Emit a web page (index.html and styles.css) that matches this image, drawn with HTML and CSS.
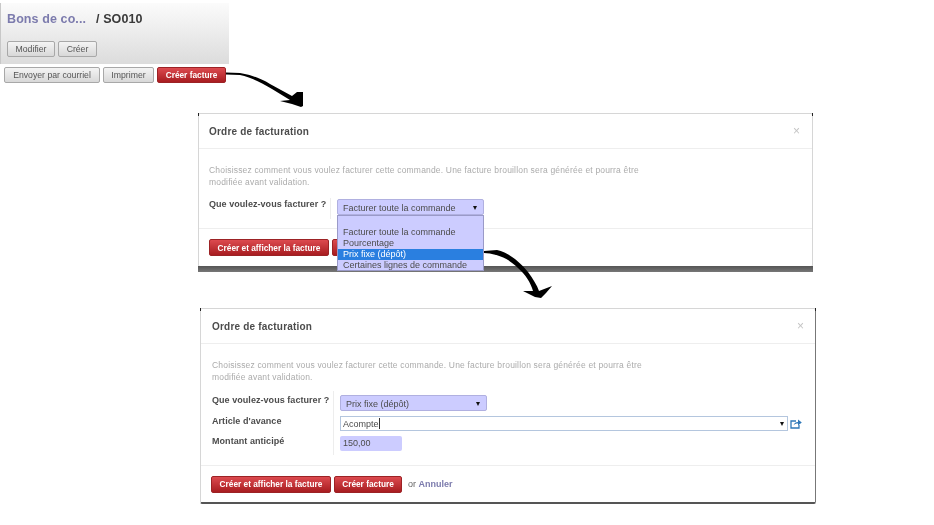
FILE: index.html
```html
<!DOCTYPE html>
<html lang="fr">
<head>
<meta charset="utf-8">
<title>Ordre de facturation</title>
<link rel="stylesheet" href="styles.css">
</head>
<body>
<main class="canvas">
  <section class="record">
    <div class="record-head">
      <h1 class="crumb"><span class="crumb-link">Bons de co...</span><span class="crumb-current">/ SO010</span></h1>
      <div class="btn-row"><button class="btn">Modifier</button><button class="btn">Créer</button></div>
    </div>
    <div class="btn-row status-row">
      <button class="btn btn-send">Envoyer par courriel</button><button class="btn btn-print">Imprimer</button><button class="btn btn-primary btn-invoice-top">Créer facture</button>
    </div>
  </section>

  <section class="dialog dialog-one">
    <header class="dialog-head"><h2>Ordre de facturation</h2><span class="close">×</span></header>
    <div class="dialog-body">
      <p class="help">Choisissez comment vous voulez facturer cette commande. Une facture brouillon sera générée et pourra être<br>modifiée avant validation.</p>
      <div class="form">
        <div class="labels"><label>Que voulez-vous facturer ?</label></div>
        <div class="fields"><div class="select"><span>Facturer toute la commande</span><i class="caret"></i></div></div>
      </div>
    </div>
    <footer class="dialog-foot"><button class="btn btn-primary btn-wide">Créer et afficher la facture</button><button class="btn btn-primary btn-invoice">Créer facture</button></footer>
  </section>
  <div class="backdrop-strip"></div>
  <ul class="dropdown">
    <li>Facturer toute la commande</li>
    <li>Pourcentage</li>
    <li class="active">Prix fixe (dépôt)</li>
    <li>Certaines lignes de commande</li>
  </ul>

  <section class="dialog dialog-two">
    <header class="dialog-head"><h2>Ordre de facturation</h2><span class="close">×</span></header>
    <div class="dialog-body">
      <p class="help">Choisissez comment vous voulez facturer cette commande. Une facture brouillon sera générée et pourra être<br>modifiée avant validation.</p>
      <div class="form form-full">
        <div class="labels">
          <label>Que voulez-vous facturer ?</label>
          <label>Article d'avance</label>
          <label>Montant anticipé</label>
        </div>
        <div class="fields">
          <div class="select"><span>Prix fixe (dépôt)</span><i class="caret"></i></div>
          <div class="combo-row">
            <div class="combo"><span>Acompte</span><b class="cursor"></b><i class="caret"></i></div>
            <svg class="ext" viewBox="0 0 12 10" width="12" height="10"><path d="M6 2H1v7h8V6" fill="none" stroke="#2f78b8" stroke-width="1.3"/><path d="M3.5 6.5C4 4 6 3 8 3V0.6L11.8 3.5 8 6.4V4.600C6 4.600 4.600 5.200 3.500 6.500Z" fill="#2f78b8"/></svg>
          </div>
          <div class="amount">150,00</div>
        </div>
      </div>
    </div>
    <footer class="dialog-foot"><button class="btn btn-primary btn-wide">Créer et afficher la facture</button><button class="btn btn-primary btn-invoice">Créer facture</button><span class="or">or <a>Annuler</a></span></footer>
  </section>

  <svg class="arrows" viewBox="0 0 934 525" width="934" height="525">
    <path d="M226 72.500L240 73C252 75 262 79 270 84L292 96L297 92L303 92L303 106L301 107L292 104L280 101L290 100L272 89C262 83 250 77 240 75L226 74.500Z" fill="#000"/>
    <path d="M484 251L497 250C508 252 520 262 528 272C533 279 537 285 539 291L552 286L546 293L541 298L535 297L523 291L533 291C531 283 525 274 518 268C510 260 500 254 484 253Z" fill="#000"/>
  </svg>
</main>
</body>
</html>
```
FILE: styles.css
```css
* { box-sizing: border-box; }
html, body { margin: 0; padding: 0; background: #fff; }
body { font-family: "Liberation Sans", Arial, sans-serif; color: #4c4c4c; }
.canvas { position: relative; width: 934px; height: 525px; overflow: hidden; filter: blur(0.45px); }

.btn {
  display: block; margin: 0; padding: 0; height: 16px;
  font: 8.7px "Liberation Sans", Arial, sans-serif; color: #555;
  background: linear-gradient(#f4f4f4, #d8d8d8);
  border: 1px solid #a8a8a8; border-radius: 2px; white-space: nowrap; text-align: center;
}
.btn-primary {
  color: #fff; font-weight: bold; font-size: 8.3px;
  background: linear-gradient(#dc4a4f, #a81c20); border-color: #9c2225;
}

.record { position: absolute; left: 0; top: 3px; width: 229px; }
.record-head {
  height: 61px; padding: 9px 0 0 6px; border-left: 1px solid #c8c8c8;
  background: linear-gradient(#fbfbfb, #dcdcdc);
}
.crumb { margin: 0 0 14px; height: 15px; font-size: 12.5px; line-height: 15px; font-weight: bold; white-space: nowrap; letter-spacing: .1px; display: flex; }
.crumb-link { color: #7c7bad; width: 89px; }
.crumb-current { color: #3a3a3a; }
.btn-row { display: flex; gap: 3px; }
.record-head .btn:first-child { width: 48px; }
.record-head .btn:last-child { width: 39px; }
.status-row { padding: 3px 0 0 4px; height: 19px; background: #fff; }
.btn-send { width: 96px; }
.btn-print { width: 51px; }
.btn-invoice-top { width: 69px; }

.dialog { position: absolute; display: flex; flex-direction: column; background: #fff; border: 1px solid #d6d6d6; border-radius: 2px; }
.dialog::before, .dialog::after { content: ""; position: absolute; top: -1px; width: 1px; height: 3px; background: #222; }
.dialog::before { left: -1px; }
.dialog::after { right: -1px; }
.dialog-one { left: 198px; top: 113px; width: 615px; height: 154px; }
.dialog-two { left: 200px; top: 308px; width: 616px; height: 196px; border-right: 1px solid #777; border-bottom: 2px solid #555; }
.dialog-head { height: 35px; flex: none; padding: 0 10px; display: flex; align-items: center; justify-content: space-between; border-bottom: 1px solid #eee; }
.dialog-two .dialog-head, .dialog-two .dialog-body { padding-left: 11px; }
.dialog-two .dialog-head { padding-right: 11px; }
.dialog-one .dialog-head { padding-right: 12px; }
.dialog-head h2 { margin: 0; font-size: 10px; font-weight: bold; color: #4c4c4c; letter-spacing: .2px; }
.close { color: #c4c4c4; font-size: 12px; line-height: 12px; }
.dialog-body { padding: 15px 10px 0; }
.help { margin: 0; font-size: 8.5px; line-height: 12px; color: #ababab; letter-spacing: .18px; white-space: nowrap; }
.form { display: flex; margin-top: 10px; height: 21px; }
.form-full { height: 64px; margin-top: 8px; }
.labels { width: 122px; border-right: 1px solid #ededed; display: flex; flex-direction: column; gap: 8.5px; flex: none; }
.form-full .labels { padding-top: 3px; }
.labels label { font-size: 9px; line-height: 12px; font-weight: bold; color: #4c4c4c; letter-spacing: .05px; white-space: nowrap; }
.fields { padding: 1px 0 0 6px; flex: 1; display: flex; flex-direction: column; gap: 5px; }
.form-full .fields { padding-top: 4px; }
.select {
  width: 147px; height: 16px; padding: 1px 6px 0 5px; display: flex; align-items: center; justify-content: space-between;
  font-size: 9px; color: #4c4c4c;
  background: #ccccff; border: 1px solid #b0b0e0; border-radius: 2px;
}
.caret { display: block; width: 0; height: 0; border: 2.5px solid transparent; border-top: 4px solid #111; border-bottom: 0; }
.combo-row { display: flex; align-items: center; gap: 2px; }
.combo {
  width: 448px; height: 15px; padding: 0 3px 0 2px; display: flex; align-items: center;
  font-size: 9px; color: #4c4c4c; background: #fff; border: 1px solid #b4c6de;
}
.combo .caret { margin-left: auto; }
.cursor { width: 1px; height: 11px; background: #333; }
.amount { width: 62px; height: 15px; padding: 0 3px; font-size: 9px; line-height: 15px; background: #ccccff; border-radius: 2px; }
.dialog-foot { display: flex; align-items: center; gap: 3px; height: 38px; flex: none; margin-top: auto; padding: 0 10px; border-top: 1px solid #eee; }
.dialog-two .dialog-foot { height: 37px; }
.dialog-foot .btn { height: 17px; }
.btn-wide { width: 120px; }
.btn-invoice { width: 68px; }
.or { margin-left: 3px; font-size: 9px; color: #666; }
.or a { color: #7c7bad; font-weight: bold; }

.backdrop-strip { position: absolute; left: 198px; top: 266px; width: 615px; height: 6px; background: linear-gradient(#555, #777); }
.dropdown {
  position: absolute; left: 337px; top: 215px; width: 147px; height: 56px; margin: 0; padding: 11px 0 0; list-style: none;
  background: #ccccff; border: 1px solid #9a9ac8; font-size: 9px; line-height: 11px; color: #4c4c4c;
}
.dropdown li { padding-left: 5px; height: 11px; white-space: nowrap; }
.dropdown .active { background: #2a7fe0; color: #fff; }
.arrows { position: absolute; left: 0; top: 0; pointer-events: none; }
```
